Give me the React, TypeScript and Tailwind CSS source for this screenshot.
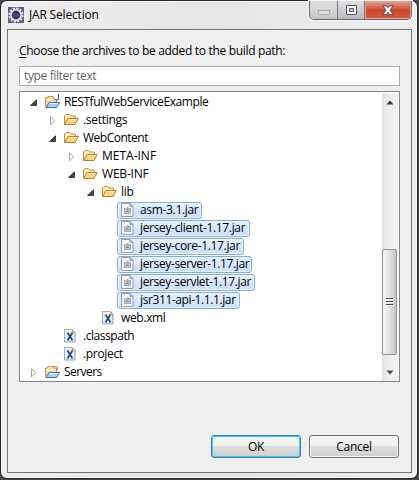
import React from 'react';

type Kind = 'project' | 'server' | 'folder' | 'jar' | 'xml';
type Item = { label: string; kind: Kind; pad: string; open?: boolean; leaf?: boolean; box?: string; tracking: string };

const items: Item[] = [
  { label: 'RESTfulWebServiceExample', kind: 'project', pad: 'pl-[8px]', open: true, tracking: 'tracking-[-0.42px]' },
  { label: '.settings', kind: 'folder', pad: 'pl-[27px]', tracking: 'tracking-[-0.3px]' },
  { label: 'WebContent', kind: 'folder', pad: 'pl-[27px]', open: true, tracking: 'tracking-[-0.5px]' },
  { label: 'META-INF', kind: 'folder', pad: 'pl-[46px]', tracking: 'tracking-[0px]' },
  { label: 'WEB-INF', kind: 'folder', pad: 'pl-[46px]', open: true, tracking: 'tracking-[-0.2px]' },
  { label: 'lib', kind: 'folder', pad: 'pl-[65px]', open: true, tracking: 'tracking-[-0.3px]' },
  { label: 'asm-3.1.jar', kind: 'jar', pad: 'pl-[84px]', leaf: true, box: 'w-[85px]', tracking: 'tracking-[-0.33px]' },
  { label: 'jersey-client-1.17.jar', kind: 'jar', pad: 'pl-[84px]', leaf: true, box: 'w-[133px]', tracking: 'tracking-[-0.33px]' },
  { label: 'jersey-core-1.17.jar', kind: 'jar', pad: 'pl-[84px]', leaf: true, box: 'w-[127px]', tracking: 'tracking-[-0.35px]' },
  { label: 'jersey-server-1.17.jar', kind: 'jar', pad: 'pl-[84px]', leaf: true, box: 'w-[135px]', tracking: 'tracking-[-0.37px]' },
  { label: 'jersey-servlet-1.17.jar', kind: 'jar', pad: 'pl-[84px]', leaf: true, box: 'w-[138px]', tracking: 'tracking-[-0.38px]' },
  { label: 'jsr311-api-1.1.1.jar', kind: 'jar', pad: 'pl-[84px]', leaf: true, box: 'w-[123px]', tracking: 'tracking-[-0.4px]' },
  { label: 'web.xml', kind: 'xml', pad: 'pl-[65px]', leaf: true, tracking: 'tracking-[-0.35px]' },
  { label: '.classpath', kind: 'xml', pad: 'pl-[27px]', leaf: true, tracking: 'tracking-[-0.45px]' },
  { label: '.project', kind: 'xml', pad: 'pl-[27px]', leaf: true, tracking: 'tracking-[-0.33px]' },
  { label: 'Servers', kind: 'server', pad: 'pl-[8px]', tracking: 'tracking-[-0.55px]' },
];

function Icon({ kind }: { kind: Kind }) {
  if (kind === 'jar')
    return (
      <svg className="h-4 w-4 shrink-0" viewBox="0 0 16 16">
        <path d="M1.500 1.500h8.500l3 3v10H1.500z" fill="#f6f7f8" stroke="#979da3" />
        <path d="M10 1.500v3h3z" fill="#c9cdd0" stroke="#9ba1a7" />
        <path d="M4 6h7v6H4z" fill="#b4c9dc" />
        <path d="M4.500 6v5.500h6V6" fill="none" stroke="#8fabc3" />
        <path d="M7 5h1.500v1.500h1V8H8v1H6.500V7H7z" fill="#dd9567" />
        <path d="M6 9.500h3" stroke="#6c8ca8" />
      </svg>
    );
  if (kind === 'xml')
    return (
      <svg className="h-4 w-4 shrink-0" viewBox="0 0 16 16">
        <path d="M1.500 1.500h7.500l3 3v9.500H1.500z" fill="#e6f2fd" stroke="#8fa5c3" />
        <path d="M1.500 9V1.500h7.500l3 3V9" fill="none" stroke="#b9b28f" />
        <path d="M9 1v3.500h3.500z" fill="#d5a94b" />
        <path d="M4.700 5l4.600 7M9.300 5l-4.600 7" stroke="#24466f" strokeWidth="1.700" />
        <path d="M3.800 5h2.200M8 5h2.200M3.800 12h2.200M8 12h2.200" stroke="#24466f" strokeWidth=".8" />
      </svg>
    );
  if (kind === 'folder')
    return (
      <svg className="h-4 w-4 shrink-0" viewBox="0 0 16 16">
        <path d="M1.500 12.500V4L3 2.500h3.500L8 4h4l.5 1v2" fill="#ffedb4" stroke="#c08c42" />
        <path d="M1.500 12.500L5 6.500h10.200L12 12.500z" fill="#fbd584" stroke="#b67c32" strokeLinejoin="round" />
        <path d="M5.600 7.500h8" stroke="#fff0bd" />
      </svg>
    );
  return (
    <svg className="h-4 w-4 shrink-0 overflow-visible" viewBox="0 0 16 16">
      <path d="M1.500 12.500V4h2L4 2.500h5L9.500 4h3v4" fill="#f8dfa0" stroke="#b69357" />
      <path d="M2.500 5.500h9" stroke="#fff4cf" />
      <path d="M2 13.500L5 8.500h10.500l-3 5z" fill="#a9ceff" stroke="#3b6aad" strokeLinejoin="round" />
      <path d="M5.500 9.500h8.500" stroke="#e7f3ff" />
      {kind === 'project' ? (
        <>
          <path d="M10 0h6v6h-6z" fill="#fff" />
          <path d="M14.500 0v4q0 2-2 2T10.300 4.700" fill="none" stroke="#3e6584" strokeWidth="1.200" />
        </>
      ) : (
        <path d="M5 2.500h8.500v4" fill="none" stroke="#c5a76b" />
      )}
    </svg>
  );
}

function Arrow({ open, leaf }: { open?: boolean; leaf?: boolean }) {
  if (leaf) return <span className="w-4 shrink-0" />;
  return (
    <svg className="h-4 w-4 shrink-0" viewBox="0 0 16 16">
      {open ? (
        <path d="M8.500 5.800v5.700H2.500z" fill="#474747" stroke="#242424" strokeWidth=".8" />
      ) : (
        <path d="M3.500 4.800v8L7.700 8.800z" fill="#fff" stroke="#a2a2a2" />
      )}
    </svg>
  );
}

function Row({ item }: { item: Item }) {
  return (
    <div className={`flex h-[18px] items-center ${item.pad}`}>
      <Arrow open={item.open} leaf={item.leaf} />
      {item.box ? (
        <div className={`-ml-[3px] flex h-[17px] items-center rounded-[3px] border border-[#84acdd] bg-linear-to-b from-[#e7f1fd] to-[#c8def9] pl-[2px] shadow-[inset_0_0_0_1px_#eaf4ff] ${item.box}`}>
          <Icon kind={item.kind} />
          <span className={`ml-1 leading-[16px] whitespace-nowrap ${item.tracking}`}>{item.label}</span>
        </div>
      ) : (
        <>
          <Icon kind={item.kind} />
          <span className={`ml-1 leading-[18px] whitespace-nowrap ${item.tracking}`}>{item.label}</span>
        </>
      )}
    </div>
  );
}

function EclipseLogo() {
  return (
    <svg className="h-4 w-4" viewBox="0 0 16 16">
      <path d="M0 0h16v16H0z" fill="#66578c" />
      <circle cx="8" cy="8" r="6.700" fill="none" stroke="#e4e1e8" strokeWidth="1.800" strokeDasharray="2.300 1.208" />
      <circle cx="8" cy="8" r="5.200" fill="#3a3654" stroke="#edeaf0" strokeWidth="1.600" />
      <path d="M4.500 7h7M4.500 9h7" stroke="#6a6584" strokeWidth=".8" />
    </svg>
  );
}

export default function App() {
  return (
    <div className="h-[480px] w-[419px] overflow-hidden bg-[#4a4747] pb-px font-['Open_Sans','Noto_Sans',sans-serif] text-[12px] text-black">
      <div className="flex h-[479px] w-[418px] flex-col rounded-[7px] border border-[#282626] bg-linear-to-r from-[#eeeeee] via-[#e5e5e5] to-[#eeeeee] px-[6px] pb-[5px] shadow-[inset_0_0_0_1px_#fafafa]">
        <header className="flex h-[28px] shrink-0 items-start">
          <div className="mt-[6px] ml-px"><EclipseLogo /></div>
          <h1 className="mt-[5px] ml-[5px] leading-[18px] tracking-[-0.18px]">JAR Selection</h1>
          <div className="mr-[-1px] ml-auto flex h-[19px] w-[103px] overflow-hidden rounded-b-[5px] border border-t-0 border-[#67676e] shadow-[0_0_0_1px_#f8f8f8]">
            <div className="flex w-[28px] items-center justify-center border-r border-[#77777c] bg-linear-to-b from-[#dedede] via-[#d5d5d6] to-[#c2c2c4]">
              <span className="mt-[5px] h-[5px] w-[12px] rounded-[1px] border border-[#a5a5a5] bg-[#dfdfdf]" />
            </div>
            <div className="flex w-[27px] items-center justify-center border-r border-[#77777c] bg-linear-to-b from-[#e2e2e2] via-[#cdcdd0] to-[#b9b9bf]">
              <svg className="h-[11px] w-[13px]" viewBox="0 0 13 11">
                <path d="M1.500 .5h10v9h-10z" fill="#f9f9f9" stroke="#555568" />
                <path d="M4.500 3.500h4v3h-4z" fill="#c9c9cf" stroke="#555568" />
              </svg>
            </div>
            <div className="flex flex-1 items-center justify-center bg-linear-to-b from-[#e3a18f] via-[#cc4830] to-[#cf5b40] shadow-[inset_0_0_0_1px_#e7a294]">
              <svg className="h-[11px] w-[12px]" viewBox="0 0 12 12" preserveAspectRatio="none">
                <path d="M1 1h3.500L6 3l1.500-2H11L8 5.500 11 10.500H7.500L6 8l-1.500 2.500H1L4 5.500z" fill="#f7f7f7" stroke="#575263" strokeLinejoin="round" />
              </svg>
            </div>
          </div>
        </header>

        <main className="flex w-[405px] flex-1 flex-col border border-[#737373] bg-[#efefef] px-[11px]">
          <div className="mt-[12px] h-[18px] leading-[18px] tracking-[-0.32px] whitespace-nowrap">
            <span className="underline underline-offset-2">C</span>hoose the archives to be added to the build path:
          </div>
          <div className="mt-[6px] h-[20px] w-[381px] shrink-0 border border-[#a9a9b0] bg-white pl-1 leading-[18px] tracking-[-0.37px] text-[#646464]">type filter text</div>
          <div className="mt-[5px] flex h-[291px] w-[381px] shrink-0 border border-[#83838e] bg-white pt-px">
            <div className="min-w-0 flex-1">
              {items.map((item) => <Row key={item.label} item={item} />)}
            </div>
            <div className="mr-px flex h-[288px] w-[16px] flex-col items-center bg-linear-to-r from-[#e3e3e3] via-[#eeeeee] to-[#f2f2f2]">
              <svg className="mt-[7px] h-[5px] w-[8px] shrink-0" viewBox="0 0 8 5"><path d="M4 .5L7.500 4.500h-7z" fill="#383838" /></svg>
              <div className="mt-[144px] flex h-[106px] w-[15px] shrink-0 flex-col items-center justify-center gap-px self-start rounded-[2px] border border-[#929297] bg-linear-to-r from-[#f7f7f7] via-[#e2e2e3] to-[#c4c4c8]">
                <span className="h-[2px] w-[7px] border-t border-[#454545] bg-white" />
                <span className="h-[2px] w-[7px] border-t border-[#454545] bg-white" />
                <span className="h-[2px] w-[7px] border-t border-[#454545] bg-white" />
              </div>
              <svg className="mt-[15px] h-[5px] w-[8px] shrink-0" viewBox="0 0 8 5"><path d="M4 4.500L.5.500h7z" fill="#484848" /></svg>
            </div>
          </div>
          <div className="mt-[53px] flex justify-end gap-[8px] pr-px">
            <button className="h-[23px] w-[90px] rounded-[3px] border border-[#3c7fb1] bg-linear-to-b from-[#f2f2f2] from-45% via-[#dddddd] via-50% to-[#cecece] leading-[20px] tracking-[-0.3px] shadow-[inset_0_0_0_1px_#40ccf2]">OK</button>
            <button className="h-[23px] w-[90px] rounded-[3px] border border-[#707070] bg-linear-to-b from-[#f2f2f2] from-45% via-[#dddddd] via-50% to-[#cecece] leading-[20px] tracking-[-0.25px] shadow-[inset_0_0_0_1px_#f9f9f9]">Cancel</button>
          </div>
        </main>
      </div>
    </div>
  );
}
